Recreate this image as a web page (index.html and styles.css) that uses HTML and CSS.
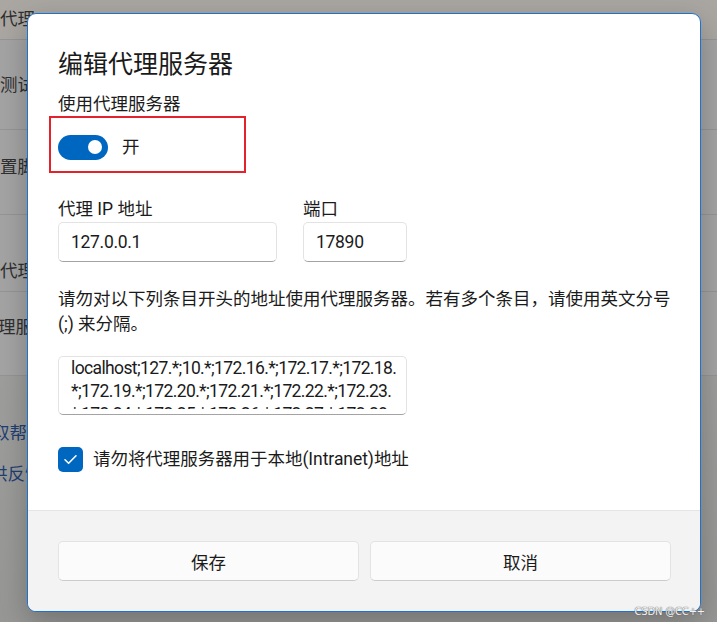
FILE: index.html
```html
<!DOCTYPE html>
<html lang="zh-CN">
<head>
<meta charset="utf-8">
<title>编辑代理服务器</title>
<link rel="stylesheet" href="styles.css">
</head>
<body>
<div class="page">
  <div class="band band-top"><span class="ptext">代理</span></div>
  <div class="band band-1"><span class="ptext">测试</span></div>
  <div class="band band-2"><span class="ptext">置脚本</span></div>
  <div class="band band-3"><span class="ptext">代理</span></div>
  <div class="band band-4"><span class="ptext shift-4">理服务器</span></div>
  <div class="links">
    <span class="plink shift-l1">取帮助</span>
    <span class="plink shift-l2">供反馈</span>
  </div>
</div>

<div class="dialog">
  <div class="dlg-body">
    <h1 class="dlg-title">编辑代理服务器</h1>
    <div class="label">使用代理服务器</div>
    <div class="toggle-row">
      <span class="toggle"><span class="knob"></span></span>
      <span class="toggle-text">开</span>
    </div>
    <div class="fields">
      <div class="field field-ip">
        <div class="label">代理 IP 地址</div>
        <div class="input">127.0.0.1</div>
      </div>
      <div class="field field-port">
        <div class="label">端口</div>
        <div class="input">17890</div>
      </div>
    </div>
    <p class="desc">请勿对以下列条目开头的地址使用代理服务器。若有多个条目，请使用英文分号<br>(;) 来分隔。</p>
    <div class="textarea">
      <div class="ta-clip">
        <div class="ta-line">localhost;127.*;10.*;172.16.*;172.17.*;172.18.</div>
        <div class="ta-line">*;172.19.*;172.20.*;172.21.*;172.22.*;172.23.</div>
        <div class="ta-line">*;172.24.*;172.25.*;172.26.*;172.27.*;172.28.</div>
      </div>
    </div>
    <div class="check-row">
      <span class="checkbox">
        <svg viewBox="0 0 25 25" width="25" height="25"><path d="M7 12.8 L10.6 16.3 L18 8.8" fill="none" stroke="#ffffff" stroke-width="1.6" stroke-linecap="round" stroke-linejoin="round"/></svg>
      </span>
      <span class="check-text">请勿将代理服务器用于本地(Intranet)地址</span>
    </div>
  </div>
  <div class="dlg-footer">
    <div class="btn">保存</div>
    <div class="btn">取消</div>
  </div>
  <div class="annot"></div>
</div>

<div class="watermark">CSDN @CC++</div>
</body>
</html>
```

FILE: styles.css
```css
* { box-sizing: border-box; }

html, body {
  margin: 0;
  padding: 0;
}

body {
  width: 717px;
  height: 622px;
  overflow: hidden;
  position: relative;
  background: #9d9d9c;
  font-family: "Segoe UI", Roboto, "Noto Sans CJK SC", sans-serif;
  color: #1b1b1b;
}

/* ---------- dimmed settings page behind the dialog ---------- */
.page {
  display: flex;
  flex-direction: column;
  height: 622px;
  background: linear-gradient(180deg, #a2a2a1 0%, #9e9e9d 60%, #979796 100%);
}

.band {
  border-bottom: 1px solid #959595;
  background: #a4a4a4;
  font-size: 17.5px;
  line-height: 20px;
  color: #2f2f2f;
  white-space: nowrap;
}

.band-top { height: 40px; padding-top: 9px; background: #aaa7a3; }
.band-1 { height: 90px; padding-top: 35px; }
.band-2 { height: 85px; padding-top: 27px; }
.band-3 { height: 77px; padding-top: 46px; }
.band-4 { height: 84px; padding-top: 25px; }

.ptext { display: block; }
.shift-4 { margin-left: -2px; }

.links {
  display: flex;
  flex-direction: column;
  gap: 21px;
  padding-top: 47px;
  font-size: 17.5px;
  line-height: 20px;
  color: #1f3f73;
  white-space: nowrap;
}
.plink { display: block; }
.shift-l1 { margin-left: -8px; }
.shift-l2 { margin-left: -10px; }

/* ---------- dialog ---------- */
.dialog {
  position: absolute;
  left: 27px;
  top: 13px;
  width: 674px;
  height: 599px;
  border: 1px solid #1a73d1;
  border-radius: 9px;
  background: #ffffff;
  overflow: hidden;
  display: flex;
  flex-direction: column;
  box-shadow: 0 10px 30px rgba(0, 0, 0, 0.25);
}

.dlg-body {
  flex: 1;
  padding: 33px 30px 0 30px;
  display: flex;
  flex-direction: column;
}

.dlg-title {
  margin: 0 0 10px 0;
  font-size: 25px;
  line-height: 35px;
  font-weight: 400;
  color: #1a1a1a;
}

.label {
  font-size: 17.5px;
  line-height: 25px;
  color: #1b1b1b;
}

.toggle-row {
  margin-top: 10px;
  height: 40px;
  display: flex;
  align-items: center;
  gap: 14px;
}

.toggle {
  width: 50px;
  height: 25px;
  border-radius: 13px;
  background: #0067c0;
  display: flex;
  align-items: center;
  justify-content: flex-end;
  padding-right: 6px;
}

.knob {
  width: 14px;
  height: 14px;
  border-radius: 50%;
  background: #ffffff;
}

.toggle-text {
  font-size: 17.5px;
  line-height: 25px;
}

.fields {
  margin-top: 30px;
  display: flex;
  gap: 26px;
}

.field-ip { width: 219px; }
.field-port { width: 104px; }

.input {
  height: 40px;
  border: 1px solid #e3e3e3;
  border-bottom-color: #a3a3a3;
  border-radius: 5px;
  background: #ffffff;
  padding: 0 12px;
  display: flex;
  align-items: center;
  font-size: 17.5px;
  letter-spacing: -0.3px;
  color: #1b1b1b;
}

.desc {
  margin: 24.5px 0 0 0;
  font-size: 17.5px;
  line-height: 25.5px;
  color: #1b1b1b;
  white-space: nowrap;
}

.textarea {
  margin-top: 18px;
  width: 349px;
  height: 59px;
  border: 1px solid #e3e3e3;
  border-bottom-color: #a3a3a3;
  border-radius: 5px;
  background: #ffffff;
  padding: 0 4px 0 12px;
}

.ta-clip {
  height: 52px;
  overflow: hidden;
}

.ta-line {
  font-size: 17.5px;
  line-height: 23px;
  white-space: nowrap;
  letter-spacing: -0.62px;
}

.check-row {
  margin-top: 25px;
  height: 40px;
  display: flex;
  align-items: center;
  gap: 10px;
}

.checkbox {
  width: 25px;
  height: 25px;
  border-radius: 5px;
  background: #0067c0;
  display: block;
}

.checkbox svg { display: block; }

.check-text {
  font-size: 17.5px;
  line-height: 25px;
  letter-spacing: -0.05px;
}

.dlg-footer {
  height: 101px;
  flex: none;
  border-top: 1px solid #e5e5e5;
  background: #f3f3f3;
  padding: 30px 29px 30px 30px;
  display: flex;
  gap: 11px;
}

.btn {
  flex: 1;
  height: 40px;
  border: 1px solid #e3e3e3;
  border-bottom-color: #cccccc;
  border-radius: 5px;
  background: #fbfbfb;
  display: flex;
  align-items: center;
  justify-content: center;
  font-size: 17.5px;
  color: #1b1b1b;
}

/* red annotation rectangle drawn over the toggle */
.annot {
  position: absolute;
  left: 21px;
  top: 102px;
  width: 197px;
  height: 57px;
  border: 2px solid #e3222b;
  pointer-events: none;
}

.watermark {
  position: absolute;
  right: 12px;
  bottom: 4px;
  font-family: "DejaVu Sans", sans-serif;
  font-size: 10px;
  line-height: 12px;
  color: #f4f4f4;
  text-shadow: 0 0 1px #666, 0 0 1px #666;
  letter-spacing: -0.2px;
}
```
